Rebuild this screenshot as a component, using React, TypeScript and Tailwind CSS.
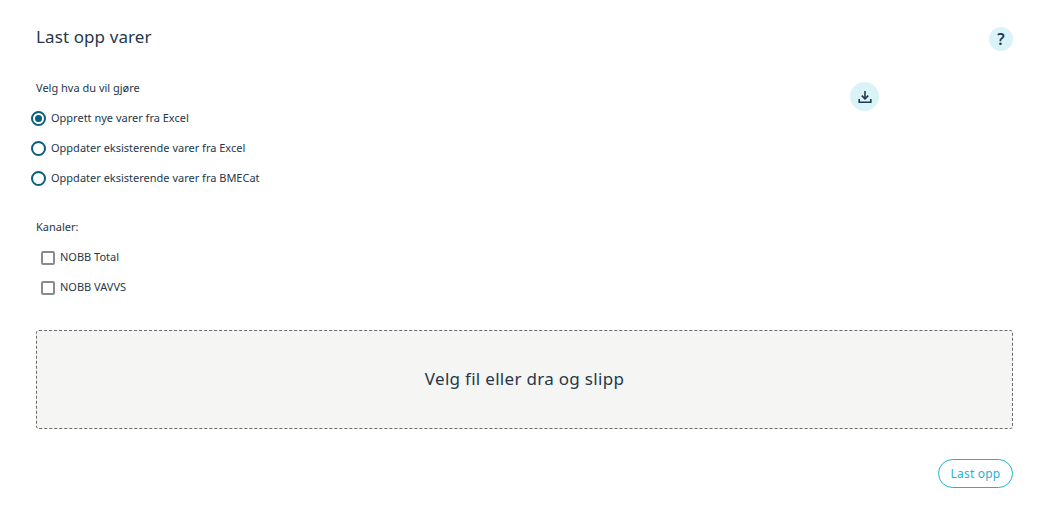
import React from "react";

const radios = [
  { id: 1, label: "Opprett nye varer fra Excel", checked: true },
  { id: 2, label: "Oppdater eksisterende varer fra Excel", checked: false },
  { id: 3, label: "Oppdater eksisterende varer fra BMECat", checked: false },
];

const channels = ["NOBB Total", "NOBB VAVVS"];

function DownloadIcon() {
  return (
    <svg width="14" height="14" viewBox="0 0 14 14" fill="none" stroke="#1f3a4d" strokeWidth="1.6">
      <path d="M7 1v7.5" />
      <path d="M3.8 5.6 7 8.8l3.2-3.2" />
      <path d="M1.2 9v3.2h11.6V9" />
    </svg>
  );
}

export default function App() {
  return (
    <div className="w-[1059px] h-[508px] bg-white pl-[36px] pr-[46px] pt-[26px] text-[#26384a] font-['Noto_Sans',sans-serif] overflow-hidden">
      {/* Header */}
      <div className="flex justify-between items-start h-[47px]">
        <h1 className="text-[17px] leading-[21px] font-normal tracking-[0.1px]">Last opp varer</h1>
        <div className="w-[24px] h-[24px] mt-[1px] rounded-full bg-[#d9f3f8] flex items-center justify-center text-[16px] font-semibold text-[#1f3a4d]">
          ?
        </div>
      </div>

      <div className="flex h-[110px]">
        <div className="w-[814px]">
          <p className="text-[11px] leading-[16px] mb-[7px] mt-[7px]">Velg hva du vil gjøre</p>
          {radios.map((r) => (
            <label key={r.id} className="flex items-center h-[30px] -ml-[5px] gap-[5px]">
              <span className="w-[15px] h-[15px] rounded-full border-2 border-[#0b5f7c] flex items-center justify-center shrink-0">
                {r.checked && <span className="w-[7px] h-[7px] rounded-full bg-[#0b5f7c]" />}
              </span>
              <span className="text-[11px]">{r.label}</span>
            </label>
          ))}
        </div>
        <div className="w-[29px] h-[29px] mt-[9px] rounded-full bg-[#d9f3f8] flex items-center justify-center">
          <DownloadIcon />
        </div>
      </div>

      {/* Channels */}
      <p className="text-[11px] leading-[16px] mt-[36px]">Kanaler:</p>
      <div className="mt-[8px] ml-[5px]">
        {channels.map((c) => (
          <label key={c} className="flex items-center h-[30px] gap-[5px]">
            <span className="w-[14px] h-[14px] rounded-[2px] border-2 border-[#8a8a8a] shrink-0" />
            <span className="text-[11px] -mt-[1px]">{c}</span>
          </label>
        ))}
      </div>

      {/* Drop zone */}
      <div className="mt-[27px] h-[99px] border border-dashed border-[#6b6b6b] rounded-[3px] bg-[#f5f5f3] flex items-center justify-center text-[17px] tracking-[0.3px]">
        <span className="-mt-[1px]">Velg fil eller dra og slipp</span>
      </div>

      <div className="flex justify-end mt-[30px]">
        <button className="w-[75px] h-[29px] rounded-full border border-[#1fb3d1] text-[#1fb3d1] text-[12px] tracking-[0.2px]">
          Last opp
        </button>
      </div>
    </div>
  );
}
